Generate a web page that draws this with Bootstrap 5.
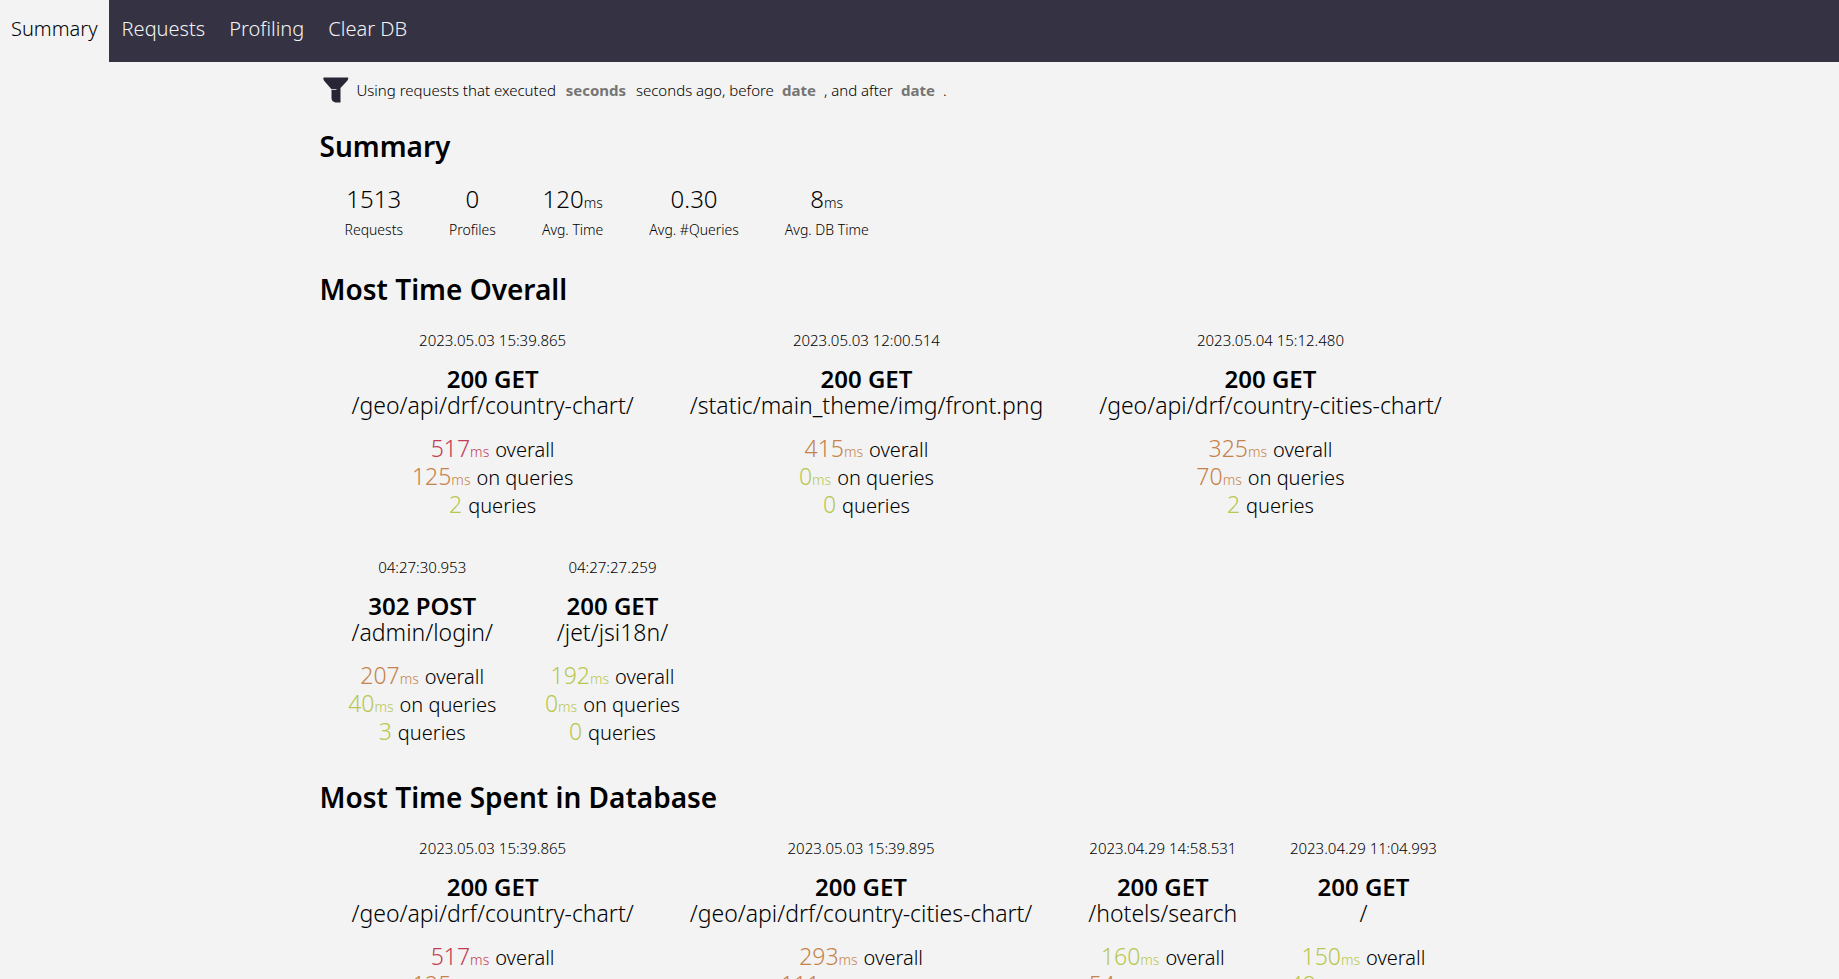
<!DOCTYPE html>
<html lang="en">
<head>
<meta charset="utf-8">
<meta name="viewport" content="width=device-width, initial-scale=1">
<title>Silky - Summary</title>
<link href="https://cdn.jsdelivr.net/npm/bootstrap@5.3.0/dist/css/bootstrap.min.css" rel="stylesheet">
<style>
  body { background: #f3f3f3; color: #000; font-family: "Noto Sans", sans-serif; font-weight: 300; font-size: 20px; }
  html { scrollbar-width: none; }
  .topbar { background: #353243; }
  .topbar .nav { gap: 2px; }
  .topbar .nav-link { color: #f3f3f3; font-size: 20px; line-height: 28px; padding: 15px 11px 19px; border-radius: 0; }
  .topbar .nav-link.active { background: #f3f3f3; color: #000; }
  .page { max-width: 1200px; }
  .filters { font-size: 15px; line-height: 30px; padding-top: 13px; }
  .filters .funnel { width: 26px; height: 26px; margin: 0 8px 0 3px; }
  .filters input { border: 0; padding: 0; margin: 0 5px; background: transparent; font-weight: 700; font-size: 15px; line-height: 20px; text-align: center; }
  .filters input::placeholder { color: #757575; opacity: 1; }
  .seconds-input { width: 70px; }
  .date-input { width: 40px; }
  h2 { font-size: 28px; line-height: 34px; font-weight: 600; margin: 0 0 22px; }
  .stats { gap: 46px; padding-left: 25px; margin-bottom: 32px; }
  .stat-value { font-size: 24px; line-height: 28px; margin-bottom: 7px; }
  .stat-label { font-size: 14px; line-height: 20px; }
  .unit { font-size: 14px; line-height: 1; }
  .requests { gap: 37px 48px; padding-left: 28px; margin-bottom: 35px; }
  .request { color: #000; }
  .request:hover { color: #353243; }
  .stamp { font-size: 15px; line-height: 24px; margin-bottom: 14px; }
  .verb { font-size: 24px; line-height: 26px; font-weight: 600; }
  .path { font-size: 23px; line-height: 26px; padding: 0 4px; margin-bottom: 16px; }
  .metric { font-size: 23px; line-height: 28px; }
  .metric .what { font-size: 20px; line-height: 1; }
  .very-bad { color: #c23c54; }
  .bad { color: #c5824a; }
  .good { color: #b7c74f; }
</style>
</head>
<body>
<nav class="topbar">
  <ul class="nav">
    <li class="nav-item"><a class="nav-link active" aria-current="page" href="#">Summary</a></li>
    <li class="nav-item"><a class="nav-link" href="#">Requests</a></li>
    <li class="nav-item"><a class="nav-link" href="#">Profiling</a></li>
    <li class="nav-item"><a class="nav-link" href="#">Clear DB</a></li>
  </ul>
</nav>

<main class="page mx-auto">
  <form class="filters d-flex flex-wrap align-items-center mb-4">
    <svg class="funnel flex-shrink-0" viewBox="0 0 26 26" aria-hidden="true"><path fill="#282635" d="M1 0.500H24.500Q25.500 0.500 25.300 1.500Q25 3 23.800 4.200L17.500 11V25.500H12.500Q8.500 24.500 8.500 21V13H13.500V12.300H8.500L1.500 4.200Q0.500 3 0.300 1.500Q0.200 0.500 1 0.500Z"/></svg>
    <label for="seconds">Using requests that executed</label>
    <input class="seconds-input" id="seconds" type="text" placeholder="seconds">
    <label for="before">seconds ago, before</label>
    <input class="date-input" id="before" type="text" placeholder="date">
    <label for="after">, and after</label>
    <input class="date-input" id="after" type="text" placeholder="date">
    <span>.</span>
  </form>

  <h2>Summary</h2>
  <div class="stats d-flex flex-wrap text-center">
    <div><div class="stat-value">1513</div><div class="stat-label">Requests</div></div>
    <div><div class="stat-value">0</div><div class="stat-label">Profiles</div></div>
    <div><div class="stat-value">120<span class="unit">ms</span></div><div class="stat-label">Avg. Time</div></div>
    <div><div class="stat-value">0.30</div><div class="stat-label">Avg. #Queries</div></div>
    <div><div class="stat-value">8<span class="unit">ms</span></div><div class="stat-label">Avg. DB Time</div></div>
  </div>

  <h2>Most Time Overall</h2>
  <div class="requests d-flex flex-wrap text-center">
    <a class="request text-decoration-none" href="#">
      <div class="stamp">2023.05.03 15:39.865</div>
      <div class="verb">200 GET</div>
      <div class="path">/geo/api/drf/country-chart/</div>
      <div class="metric"><span class="very-bad">517<span class="unit">ms</span></span> <span class="what">overall</span></div>
      <div class="metric"><span class="bad">125<span class="unit">ms</span></span> <span class="what">on queries</span></div>
      <div class="metric"><span class="good">2</span> <span class="what">queries</span></div>
    </a>
    <a class="request text-decoration-none" href="#">
      <div class="stamp">2023.05.03 12:00.514</div>
      <div class="verb">200 GET</div>
      <div class="path">/static/main_theme/img/front.png</div>
      <div class="metric"><span class="bad">415<span class="unit">ms</span></span> <span class="what">overall</span></div>
      <div class="metric"><span class="good">0<span class="unit">ms</span></span> <span class="what">on queries</span></div>
      <div class="metric"><span class="good">0</span> <span class="what">queries</span></div>
    </a>
    <a class="request text-decoration-none" href="#">
      <div class="stamp">2023.05.04 15:12.480</div>
      <div class="verb">200 GET</div>
      <div class="path">/geo/api/drf/country-cities-chart/</div>
      <div class="metric"><span class="bad">325<span class="unit">ms</span></span> <span class="what">overall</span></div>
      <div class="metric"><span class="bad">70<span class="unit">ms</span></span> <span class="what">on queries</span></div>
      <div class="metric"><span class="good">2</span> <span class="what">queries</span></div>
    </a>
    <a class="request text-decoration-none" href="#">
      <div class="stamp">04:27:30.953</div>
      <div class="verb">302 POST</div>
      <div class="path">/admin/login/</div>
      <div class="metric"><span class="bad">207<span class="unit">ms</span></span> <span class="what">overall</span></div>
      <div class="metric"><span class="good">40<span class="unit">ms</span></span> <span class="what">on queries</span></div>
      <div class="metric"><span class="good">3</span> <span class="what">queries</span></div>
    </a>
    <a class="request text-decoration-none" href="#">
      <div class="stamp">04:27:27.259</div>
      <div class="verb">200 GET</div>
      <div class="path">/jet/jsi18n/</div>
      <div class="metric"><span class="good">192<span class="unit">ms</span></span> <span class="what">overall</span></div>
      <div class="metric"><span class="good">0<span class="unit">ms</span></span> <span class="what">on queries</span></div>
      <div class="metric"><span class="good">0</span> <span class="what">queries</span></div>
    </a>
  </div>

  <h2>Most Time Spent in Database</h2>
  <div class="requests d-flex flex-wrap text-center mb-0">
    <a class="request text-decoration-none" href="#">
      <div class="stamp">2023.05.03 15:39.865</div>
      <div class="verb">200 GET</div>
      <div class="path">/geo/api/drf/country-chart/</div>
      <div class="metric"><span class="very-bad">517<span class="unit">ms</span></span> <span class="what">overall</span></div>
      <div class="metric"><span class="bad">125<span class="unit">ms</span></span> <span class="what">on queries</span></div>
    </a>
    <a class="request text-decoration-none" href="#">
      <div class="stamp">2023.05.03 15:39.895</div>
      <div class="verb">200 GET</div>
      <div class="path">/geo/api/drf/country-cities-chart/</div>
      <div class="metric"><span class="bad">293<span class="unit">ms</span></span> <span class="what">overall</span></div>
      <div class="metric"><span class="bad">111<span class="unit">ms</span></span> <span class="what">on queries</span></div>
    </a>
    <a class="request text-decoration-none" href="#">
      <div class="stamp">2023.04.29 14:58.531</div>
      <div class="verb">200 GET</div>
      <div class="path">/hotels/search</div>
      <div class="metric"><span class="good">160<span class="unit">ms</span></span> <span class="what">overall</span></div>
      <div class="metric"><span class="bad">54<span class="unit">ms</span></span> <span class="what">on queries</span></div>
    </a>
    <a class="request text-decoration-none" href="#">
      <div class="stamp">2023.04.29 11:04.993</div>
      <div class="verb">200 GET</div>
      <div class="path">/</div>
      <div class="metric"><span class="good">150<span class="unit">ms</span></span> <span class="what">overall</span></div>
      <div class="metric"><span class="good">48<span class="unit">ms</span></span> <span class="what">on queries</span></div>
    </a>
  </div>
</main>
<script src="https://cdn.jsdelivr.net/npm/bootstrap@5.3.0/dist/js/bootstrap.bundle.min.js"></script>
</body>
</html>
